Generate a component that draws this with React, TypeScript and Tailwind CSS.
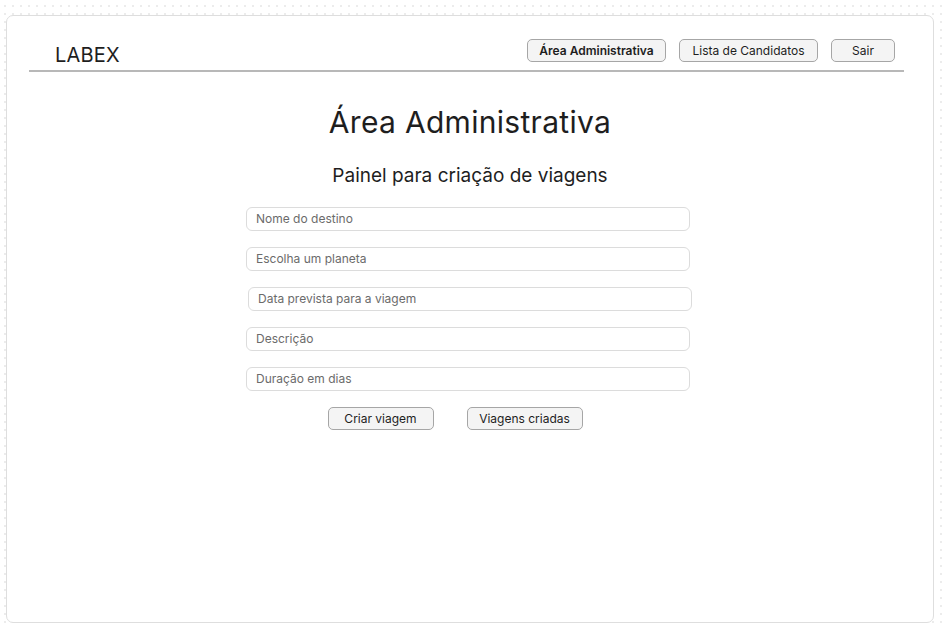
export default function App() {
  const fields = [
    { label: 'Nome do destino', shift: false },
    { label: 'Escolha um planeta', shift: false },
    { label: 'Data prevista para a viagem', shift: true },
    { label: 'Descrição', shift: false },
    { label: 'Duração em dias', shift: false },
  ];

  return (
    <div
      className="w-[942px] h-[628px] bg-white bg-[radial-gradient(circle,#ececec_0.9px,transparent_1.2px)] bg-[length:8px_8px] bg-[position:1px_2px] pt-[15px] pl-[6px] font-['Inter',sans-serif] text-[#1e1e1e]"
    >
      <div className="w-[928px] h-[608px] bg-white border border-[#dedede] rounded-[7px] flex flex-col">
        {/* header */}
        <div className="ml-[22px] mr-[29px] mt-[23px] flex items-end justify-between border-b-2 border-[#b8b8b8]">
          <div className="pl-[26px] pb-[2px] text-[20px] leading-[26px] tracking-[0.2px]">LABEX</div>
          <div className="flex gap-[13px] pr-[9px] pb-[8px]">
            <button className="h-[23px] w-[139px] rounded-[5px] border border-[#a6a6a6] bg-[#f4f4f4] text-[12px] font-semibold">
              Área Administrativa
            </button>
            <button className="h-[23px] w-[139px] rounded-[5px] border border-[#a6a6a6] bg-[#f4f4f4] text-[12px]">
              Lista de Candidatos
            </button>
            <button className="h-[23px] w-[64px] rounded-[5px] border border-[#a6a6a6] bg-[#f4f4f4] text-[12px]">
              Sair
            </button>
          </div>
        </div>

        {/* main */}
        <div className="flex flex-col items-center">
          <h1 className="mt-[30px] text-[30px] leading-[40px] tracking-[0.3px]">Área Administrativa</h1>
          <h2 className="mt-[22px] text-[19px] leading-[24px]">Painel para criação de viagens</h2>

          <div className="mt-[19px] flex flex-col gap-[16px] pr-[4px]">
            {fields.map((f) => (
              <div
                key={f.label}
                className={`h-[24px] w-[444px] rounded-[6px] border border-[#dcdcdc] bg-white flex items-center pl-[9px] text-[12px] text-[#6b6b6b] ${
                  f.shift ? 'translate-x-[2px]' : ''
                }`}
              >
                {f.label}
              </div>
            ))}
          </div>

          <div className="mt-[16px] flex gap-[33px] pr-[30px]">
            <button className="h-[23px] w-[106px] rounded-[5px] border border-[#a6a6a6] bg-[#f4f4f4] text-[12px]">
              Criar viagem
            </button>
            <button className="h-[23px] w-[116px] rounded-[5px] border border-[#a6a6a6] bg-[#f4f4f4] text-[12px]">
              Viagens criadas
            </button>
          </div>
        </div>
      </div>
    </div>
  );
}
